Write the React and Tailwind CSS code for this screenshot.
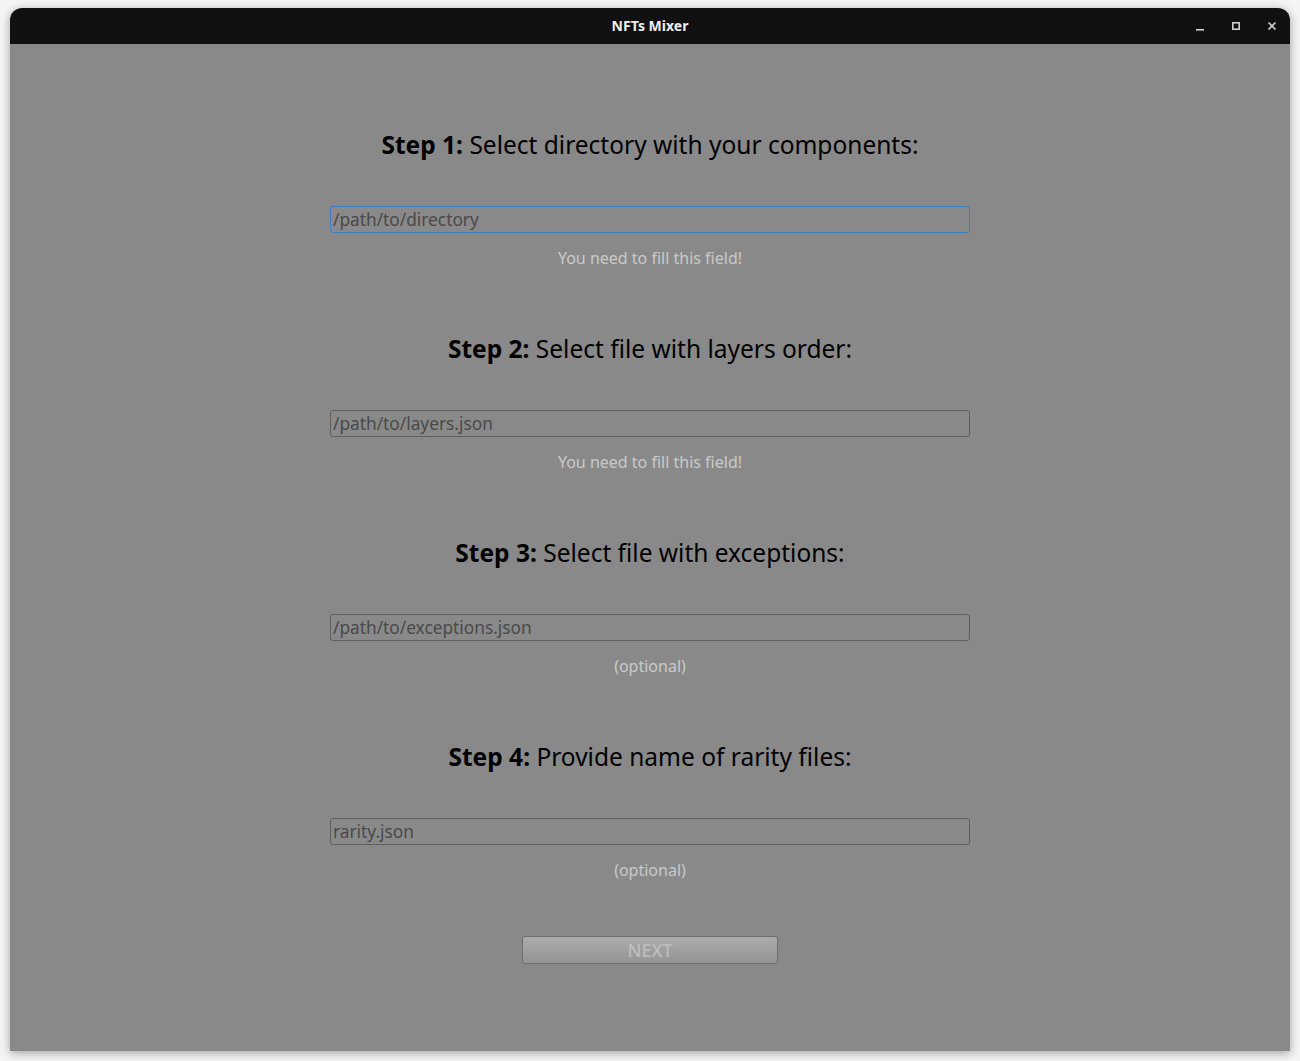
import React from "react";

const font = { fontFamily: '"Noto Sans", "Open Sans", sans-serif' };

function Section({ step, title, placeholder, hint, focused }) {
  return (
    <div className="flex flex-col items-center">
      <h2 className="h-[30px] text-[24.5px] leading-[30px] text-black">
        <span className="font-bold">Step {step}:</span> {title}
      </h2>
      <input
        readOnly
        placeholder={placeholder}
        className={
          "mt-[46px] h-[27px] w-[640px] rounded-[3px] border bg-[#898989] px-[2px] pb-[1px] text-[17.3px] text-[#3f3f3f] outline-none placeholder:text-[#4a4a4a] " +
          (focused ? "border-[#3b7fc0]" : "border-[#5f5f5f]")
        }
      />
      <p className="mt-[15px] h-[20px] text-[16px] leading-[20px] text-[#c9c9c9]">{hint}</p>
    </div>
  );
}

export default function App() {
  return (
    <div className="flex h-[1061px] w-[1300px] bg-[#f4f4f4] pt-[8px] pl-[10px]" style={font}>
      <div className="flex h-[1043px] w-[1280px] flex-col overflow-hidden rounded-t-[12px] shadow-[0_2px_10px_rgba(0,0,0,0.35)]">
        <div className="relative flex h-[36px] items-center justify-center bg-[#111111]">
          <span className="-mt-[1px] text-[14px] font-bold text-[#eeeeee]">NFTs Mixer</span>
          <div className="absolute right-[13px] top-0 flex h-full items-center gap-[26px] text-[#cfcfcf]">
            <svg width="10" height="10" viewBox="0 0 10 10">
              <rect x="1" y="8" width="8" height="1.6" fill="currentColor" />
            </svg>
            <svg width="10" height="10" viewBox="0 0 10 10">
              <rect x="1.8" y="1.8" width="6.4" height="6.4" fill="none" stroke="currentColor" strokeWidth="1.6" />
            </svg>
            <svg width="10" height="10" viewBox="0 0 10 10">
              <path d="M1.5 1.5 L8.5 8.5 M8.5 1.5 L1.5 8.5" stroke="currentColor" strokeWidth="1.6" />
            </svg>
          </div>
        </div>
        <div className="flex flex-1 flex-col items-center gap-[66px] bg-[#898989] pt-[86px]">
          <Section step="1" title="Select directory with your components:" placeholder="/path/to/directory" hint="You need to fill this field!" focused />
          <Section step="2" title="Select file with layers order:" placeholder="/path/to/layers.json" hint="You need to fill this field!" />
          <Section step="3" title="Select file with exceptions:" placeholder="/path/to/exceptions.json" hint="(optional)" />
          <Section step="4" title="Provide name of rarity files:" placeholder="rarity.json" hint="(optional)" />
          <button className="-mt-[10px] h-[28px] w-[256px] rounded-[3px] border border-[#6f6f6f] bg-gradient-to-b from-[#ababab] to-[#959595] text-[18px] font-medium leading-none text-[#bdbdbd]">
            NEXT
          </button>
        </div>
      </div>
    </div>
  );
}
